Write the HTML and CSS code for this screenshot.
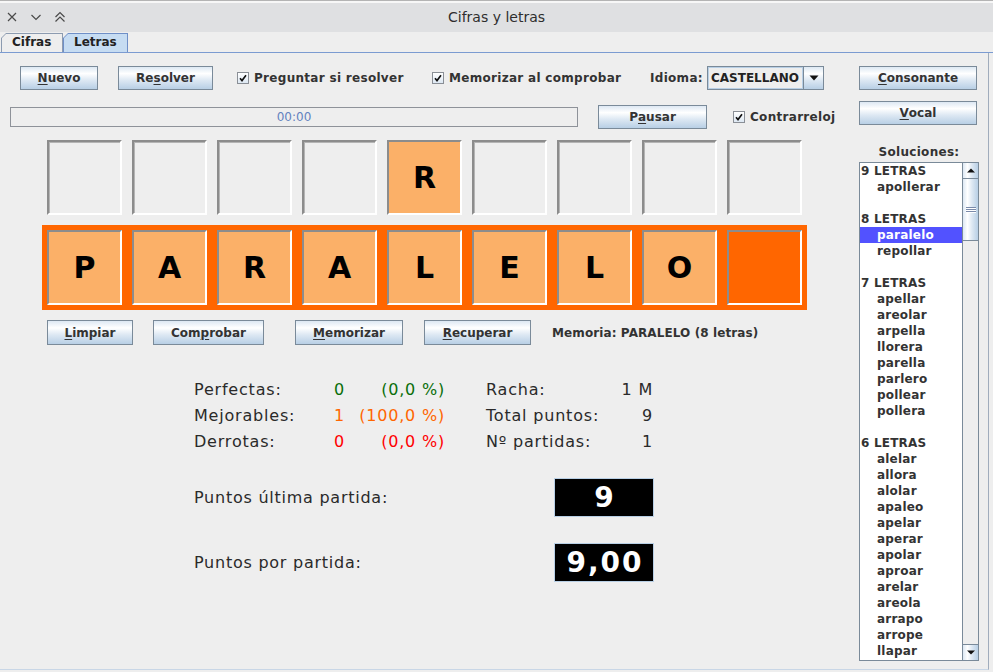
FILE: index.html
```html
<!DOCTYPE html>
<html lang="es">
<head>
<meta charset="utf-8">
<title>Cifras y letras</title>
<link rel="stylesheet" href="styles.css">
</head>
<body>
<div class="window">
  <div class="titlebar">
    <div class="wctrls">
      <span class="wbtn"><svg width="12" height="12" viewBox="0 0 12 12"><path d="M2 2L10 10M10 2L2 10" stroke="#4a4a4a" stroke-width="1.2" fill="none"/></svg></span>
      <span class="wbtn"><svg width="12" height="12" viewBox="0 0 12 12"><path d="M1.5 4L6 8.5L10.5 4" stroke="#4a4a4a" stroke-width="1.2" fill="none"/></svg></span>
      <span class="wbtn"><svg width="12" height="12" viewBox="0 0 12 12"><path d="M1.5 6L6 1.5L10.5 6M1.5 10.5L6 6L10.5 10.5" stroke="#4a4a4a" stroke-width="1.2" fill="none"/></svg></span>
    </div>
    <div class="title">Cifras y letras</div>
    <div></div>
  </div>

  <div class="tabstrip">
    <div class="tab"><div class="tab-in">Cifras</div></div>
    <div class="tab sel"><div class="tab-in">Letras</div></div>
  </div>

  <div class="content">
    <div class="main">
      <div class="row r1">
        <div class="btn w-nuevo"><u>N</u>uevo</div>
        <div class="btn w-resolver"><span>Re<u>s</u>olver</span></div>
        <div class="cb w-cb1"><span class="box"><svg width="10" height="10" viewBox="0 0 10 10"><path d="M2 5.2L4 7.6L8 2.2" stroke="#111" stroke-width="1.6" fill="none"/></svg></span>Preguntar si resolver</div>
        <div class="cb w-cb2"><span class="box"><svg width="10" height="10" viewBox="0 0 10 10"><path d="M2 5.2L4 7.6L8 2.2" stroke="#111" stroke-width="1.6" fill="none"/></svg></span>Memorizar al comprobar</div>
        <div class="lbl w-idioma">Idioma:</div>
        <div class="combo">
          <div class="combo-field">CASTELLANO</div>
          <div class="combo-arrow"><svg width="10" height="6" viewBox="0 0 10 6"><path d="M0.5 0.5H9.5L5 5.5Z" fill="#111"/></svg></div>
        </div>
      </div>

      <div class="row r2">
        <div class="progress">00:00</div>
        <div class="btn w-pausar">P<u>a</u>usar</div>
        <div class="cb w-cb3"><span class="box"><svg width="10" height="10" viewBox="0 0 10 10"><path d="M2 5.2L4 7.6L8 2.2" stroke="#111" stroke-width="1.6" fill="none"/></svg></span>Contrarreloj</div>
      </div>

      <div class="tiles top">
        <div class="tile"></div>
        <div class="tile"></div>
        <div class="tile"></div>
        <div class="tile"></div>
        <div class="tile on">R</div>
        <div class="tile"></div>
        <div class="tile"></div>
        <div class="tile"></div>
        <div class="tile"></div>
      </div>

      <div class="frame-wrap">
        <div class="tiles frame">
          <div class="tile on">P</div>
          <div class="tile on">A</div>
          <div class="tile on">R</div>
          <div class="tile on">A</div>
          <div class="tile on">L</div>
          <div class="tile on">E</div>
          <div class="tile on">L</div>
          <div class="tile on">O</div>
          <div class="tile hot"></div>
        </div>
      </div>

      <div class="row r3">
        <div class="btn w-limpiar"><u>L</u>impiar</div>
        <div class="btn w-comprobar">Com<u>p</u>robar</div>
        <div class="btn w-memorizar"><u>M</u>emorizar</div>
        <div class="btn w-recuperar"><u>R</u>ecuperar</div>
        <div class="lbl memoria">Memoria: PARALELO (8 letras)</div>
      </div>

      <div class="stats">
        <div>Perfectas:</div><div class="num green">0</div><div class="num green">(0,0 %)</div><div></div><div>Racha:</div><div class="num">1 M</div>
        <div>Mejorables:</div><div class="num orange">1</div><div class="num orange">(100,0 %)</div><div></div><div>Total puntos:</div><div class="num">9</div>
        <div>Derrotas:</div><div class="num red">0</div><div class="num red">(0,0 %)</div><div></div><div>Nº partidas:</div><div class="num">1</div>
      </div>

      <div class="pts p1">
        <div class="pts-lbl">Puntos última partida:</div>
        <div class="pts-box">9</div>
      </div>
      <div class="pts p2">
        <div class="pts-lbl">Puntos por partida:</div>
        <div class="pts-box">9,00</div>
      </div>
    </div>

    <div class="side">
      <div class="btn w-side s1"><u>C</u>onsonante</div>
      <div class="btn w-side s2"><u>V</u>ocal</div>
      <div class="sol-lbl">Soluciones:</div>
      <div class="list">
        <div class="list-items">
          <div class="li h">9 LETRAS</div>
          <div class="li i">apollerar</div>
          <div class="li"></div>
          <div class="li h">8 LETRAS</div>
          <div class="li i sel">paralelo</div>
          <div class="li i">repollar</div>
          <div class="li"></div>
          <div class="li h">7 LETRAS</div>
          <div class="li i">apellar</div>
          <div class="li i">areolar</div>
          <div class="li i">arpella</div>
          <div class="li i">llorera</div>
          <div class="li i">parella</div>
          <div class="li i">parlero</div>
          <div class="li i">pollear</div>
          <div class="li i">pollera</div>
          <div class="li"></div>
          <div class="li h">6 LETRAS</div>
          <div class="li i">alelar</div>
          <div class="li i">allora</div>
          <div class="li i">alolar</div>
          <div class="li i">apaleo</div>
          <div class="li i">apelar</div>
          <div class="li i">aperar</div>
          <div class="li i">apolar</div>
          <div class="li i">aproar</div>
          <div class="li i">arelar</div>
          <div class="li i">areola</div>
          <div class="li i">arrapo</div>
          <div class="li i">arrope</div>
          <div class="li i">llapar</div>
        </div>
        <div class="sb">
          <div class="sb-btn up"><svg width="8" height="5" viewBox="0 0 8 5"><path d="M0 4.5H8L4 0.5Z" fill="#111"/></svg></div>
          <div class="sb-thumb"><span class="grip"></span></div>
          <div class="sb-track"></div>
          <div class="sb-btn down"><svg width="8" height="5" viewBox="0 0 8 5"><path d="M0 0.5H8L4 4.5Z" fill="#111"/></svg></div>
        </div>
      </div>
    </div>
  </div>
</div>
</body>
</html>
```

FILE: styles.css
```css
* { box-sizing: border-box; }

html, body {
  margin: 0;
  padding: 0;
  background: #eeeeee;
}

body {
  font-family: "DejaVu Sans", "Liberation Sans", sans-serif;
  color: #333333;
}

.window {
  width: 993px;
  height: 672px;
  overflow: hidden;
  background: #eeeeee;
}

/* ---------- title bar ---------- */
.titlebar {
  height: 32px;
  display: grid;
  grid-template-columns: 1fr auto 1fr;
  align-items: center;
  background: #dfe0e2;
  border-top: 1px solid #b4b4b4;
  box-shadow: inset 0 2px 0 #f7f7f7;
}

.wctrls {
  display: flex;
  align-items: center;
}

.wbtn {
  width: 24px;
  height: 24px;
  display: flex;
  align-items: center;
  justify-content: center;
}

.title {
  font-size: 14px;
  color: #2e2e2e;
}

/* ---------- tabs ---------- */
.tabstrip {
  height: 21px;
  display: flex;
  align-items: flex-end;
  padding-left: 1px;
  border-bottom: 1px solid #7b9bd1;
}

.tab {
  width: 62px;
  height: 19px;
  padding: 1px 1px 0 1px;
  background: #8c9bb0;
  clip-path: polygon(0 5px, 5px 0, 100% 0, 100% 100%, 0 100%);
}

.tab.sel {
  width: 65px;
  background: #6f8fc7;
}

.tab-in {
  height: 100%;
  background: #eeeeee;
  clip-path: polygon(0 4px, 4px 0, 100% 0, 100% 100%, 0 100%);
  font-size: 12px;
  font-weight: bold;
  line-height: 17px;
  padding-left: 10px;
  color: #222;
}

.tab.sel .tab-in {
  background: #c6dcf2;
}

/* ---------- content ---------- */
.content {
  width: 989px;
  height: 617px;
  display: flex;
  border-right: 1px solid #a0acbc;
  border-bottom: 1px solid #c8d6e6;
}

.main {
  width: 850px;
  flex: none;
}

.side {
  width: 138px;
  flex: none;
  padding-left: 9px;
}

.row {
  display: flex;
  align-items: center;
}

.r1 { margin-top: 13px; height: 24px; padding-left: 20px; }
.r2 { margin-top: 15px; height: 24px; padding-left: 10px; }
.r3 { margin-top: 10px; height: 25px; padding-left: 47px; }

/* ---------- buttons ---------- */
.btn {
  height: 24px;
  flex: none;
  display: flex;
  align-items: center;
  justify-content: center;
  border: 1px solid #7a8a99;
  background: linear-gradient(to bottom, #dde8f3 0%, #ffffff 30%, #dde8f3 60%, #b8cfe5 100%);
  font-size: 12px;
  font-weight: bold;
  color: #333333;
  white-space: nowrap;
}

.btn u { text-decoration-thickness: 1px; text-underline-offset: 2px; }

.w-nuevo { width: 78px; }
.w-resolver { width: 95px; margin-left: 20px; }
.w-pausar { width: 109px; margin-left: 20px; }
.w-limpiar { width: 86px; height: 25px; }
.w-comprobar { width: 111px; height: 25px; margin-left: 20px; }
.w-memorizar { width: 108px; height: 25px; margin-left: 31px; }
.w-recuperar { width: 107px; height: 25px; margin-left: 21px; }

.w-side { width: 118px; }
.s1 { margin-top: 13px; }
.s2 { margin-top: 11px; }

/* ---------- checkboxes & labels ---------- */
.cb {
  display: flex;
  align-items: center;
  gap: 5px;
  flex: none;
  font-size: 12px;
  font-weight: bold;
  color: #333333;
  white-space: nowrap;
  letter-spacing: 0.3px;
}

.box {
  width: 12px;
  height: 12px;
  flex: none;
  border: 1px solid #8a8f96;
  background: linear-gradient(to bottom, #ffffff, #dde8f3);
  display: flex;
  align-items: center;
  justify-content: center;
}

.w-cb1 { width: 195px; margin-left: 24px; }
.w-cb2 { width: 218px; }
.w-cb3 { margin-left: 26px; }

.lbl {
  flex: none;
  font-size: 12px;
  font-weight: bold;
  color: #333333;
  white-space: nowrap;
}

.w-idioma { width: 57px; letter-spacing: 0.3px; }
.memoria { margin-left: 21px; letter-spacing: 0.1px; }

/* ---------- combo ---------- */
.combo {
  width: 117px;
  height: 24px;
  flex: none;
  display: flex;
  border: 1px solid #7a8a99;
  background: #eeeeee;
}

.combo-field {
  flex: 1;
  border: 1px solid #b8cfe5;
  font-size: 12px;
  font-weight: bold;
  line-height: 20px;
  padding-left: 2px;
  color: #222;
  white-space: nowrap;
  overflow: hidden;
}

.combo-arrow {
  width: 20px;
  flex: none;
  border-left: 1px solid #7a8a99;
  background: linear-gradient(to bottom, #dde8f3 0%, #ffffff 30%, #dde8f3 60%, #b8cfe5 100%);
  display: flex;
  align-items: center;
  justify-content: center;
}

/* ---------- progress ---------- */
.progress {
  width: 568px;
  height: 20px;
  flex: none;
  border: 1px solid #8e9299;
  background: #eeeeee;
  text-align: center;
  font-size: 12px;
  line-height: 18px;
  color: #6382bf;
}

/* ---------- tiles ---------- */
.tiles {
  display: flex;
  gap: 10px;
}

.tiles.top {
  margin-top: 11px;
  padding-left: 47px;
}

.frame-wrap {
  margin-top: 10px;
  padding-left: 42px;
  display: flex;
}

.tiles.frame {
  padding: 5px;
  background: #ff6600;
}

.tile {
  width: 75px;
  height: 75px;
  flex: none;
  background: #eeeeee;
  border-top: 2px solid #8c8c8c;
  border-left: 2px solid #8c8c8c;
  border-right: 2px solid #ffffff;
  border-bottom: 2px solid #ffffff;
  box-shadow: inset 1px 1px 0 #b4b4b4;
  display: flex;
  align-items: center;
  justify-content: center;
  font-size: 30px;
  font-weight: bold;
  color: #000000;
}

.tile.on { background: #fbb068; box-shadow: none; }
.tile.hot { background: #ff6600; box-shadow: none; }

/* ---------- stats ---------- */
.stats {
  margin-top: 31px;
  margin-left: 194px;
  display: grid;
  grid-template-columns: 120px 31px 100px 41px 120px 47px;
  grid-auto-rows: 26px;
  align-items: center;
  font-size: 16px;
  letter-spacing: 0.8px;
  color: #2a2a2a;
  white-space: nowrap;
}

.stats .num { text-align: right; letter-spacing: 0.8px; }
.green { color: #0a6e0a; }
.orange { color: #ff6600; }
.red { color: #ff0000; }

/* ---------- points ---------- */
.pts {
  display: flex;
  align-items: center;
  margin-left: 194px;
}

.p1 { margin-top: 24px; }
.p2 { margin-top: 26px; }

.pts-lbl {
  width: 360px;
  flex: none;
  font-size: 16px;
  letter-spacing: 0.75px;
  color: #2a2a2a;
  white-space: nowrap;
}

.pts-box {
  width: 100px;
  height: 39px;
  flex: none;
  background: #000000;
  border: 1px solid #b8cfe5;
  color: #ffffff;
  font-size: 28px;
  font-weight: bold;
  letter-spacing: 2px;
  display: flex;
  align-items: center;
  justify-content: center;
  padding-left: 2px;
}

/* ---------- solutions list ---------- */
.sol-lbl {
  margin-top: 19px;
  width: 120px;
  height: 17px;
  line-height: 17px;
  text-align: center;
  font-size: 12px;
  font-weight: bold;
  letter-spacing: 0.3px;
  color: #333333;
}

.list {
  margin-top: 1px;
  width: 120px;
  height: 499px;
  border: 1px solid #7a8a99;
  background: #ffffff;
  display: flex;
}

.list-items {
  flex: 1;
  overflow: hidden;
  font-size: 12px;
  font-weight: bold;
  line-height: 16px;
  color: #333333;
  letter-spacing: 0.2px;
}

.li { height: 16px; white-space: nowrap; }
.li.h { padding-left: 1px; }
.li.i { padding-left: 17px; }
.li.sel { background: #5252ff; color: #ffffff; }

.sb {
  width: 16px;
  flex: none;
  border-left: 1px solid #7a8a99;
  background: #eeeeee;
  display: flex;
  flex-direction: column;
}

.sb-btn {
  height: 16px;
  flex: none;
  display: flex;
  align-items: center;
  justify-content: center;
  background: linear-gradient(to right, #dde8f3 0%, #ffffff 30%, #dde8f3 60%, #b8cfe5 100%);
}

.sb-btn.up { border-bottom: 1px solid #7a8a99; }
.sb-btn.down { border-top: 1px solid #7a8a99; }

.sb-thumb {
  height: 62px;
  flex: none;
  border-bottom: 1px solid #7a8a99;
  background: linear-gradient(to right, #dde8f3 0%, #ffffff 30%, #dde8f3 60%, #b8cfe5 100%);
  display: flex;
  align-items: center;
  justify-content: center;
}

.grip {
  width: 10px;
  height: 6px;
  background: repeating-linear-gradient(to bottom, #7a8aaa 0, #7a8aaa 1px, #ffffff 1px, #ffffff 2px);
}

.sb-track { flex: 1; }
```
